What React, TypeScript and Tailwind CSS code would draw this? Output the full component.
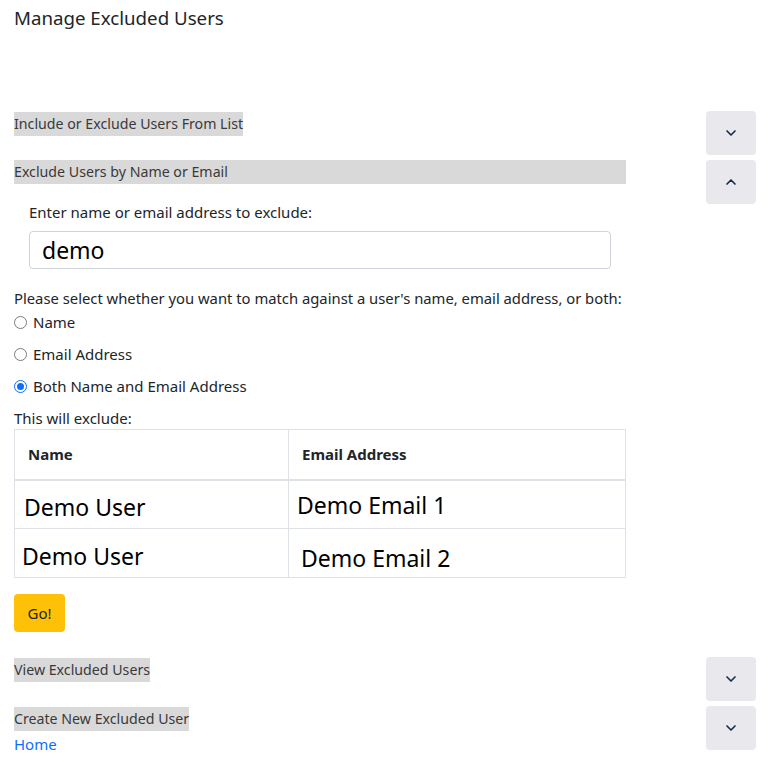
import { ChevronDown, ChevronUp } from "lucide-react";

const font = { fontFamily: '"Noto Sans", "Open Sans", sans-serif' };

function Toggle({ open }: { open?: boolean }) {
  return (
    <button className="w-[50px] h-[44px] rounded-[4px] bg-[#e8e8ed] flex items-center justify-center shrink-0 text-[#1b2a48]">
      {open ? <ChevronUp size={16} strokeWidth={2.5} /> : <ChevronDown size={16} strokeWidth={2.5} />}
    </button>
  );
}

function Section({
  title,
  open,
  full,
  first,
  children,
}: {
  title: string;
  open?: boolean;
  full?: boolean;
  first?: boolean;
  children?: React.ReactNode;
}) {
  return (
    <div className="flex items-start justify-between">
      <div className="w-[612px]">
        <div
          className={`${full ? "block" : "inline-block"} ${first ? "mt-px" : ""} bg-[#d9d9d9] h-[24px] leading-[24px] text-[14.2px] text-[#3a3a3a]`}
        >
          {title}
        </div>
        {children}
      </div>
      <Toggle open={open} />
    </div>
  );
}

function Radio({ label, checked }: { label: string; checked?: boolean }) {
  return (
    <label className="flex items-center gap-[6px] h-[32px] text-[15px] text-[#212529]">
      <span
        className={`w-[13px] h-[13px] rounded-full border flex items-center justify-center ${
          checked ? "border-[#0d6efd]" : "border-[#7a7a7a]"
        }`}
      >
        {checked && <span className="w-[7px] h-[7px] rounded-full bg-[#0d6efd]" />}
      </span>
      {label}
    </label>
  );
}

export default function App() {
  return (
    <div className="bg-white min-h-screen pl-[14px] pr-[27px] pt-[5px] text-[#212529]" style={font}>
      <h1 className="text-[18.7px] leading-[26px] text-[#212529]">Manage Excluded Users</h1>

      <div className="mt-[80px] flex flex-col gap-[5px]">
        <Section title="Include or Exclude Users From List" first />

        <Section title="Exclude Users by Name or Email" open full>
          <div className="pl-[15px] pt-[18px]">
            <div className="text-[15px] leading-[20px]">Enter name or email address to exclude:</div>
            <input
              defaultValue="demo"
              className="mt-[9px] w-[582px] h-[38px] border border-[#ced4da] rounded-[4px] px-[12px] text-[23px] text-black outline-none"
              style={font}
            />
          </div>
          <div className="mt-[19px] text-[14.8px] leading-[20px] whitespace-nowrap">
            Please select whether you want to match against a user's name, email address, or both:
          </div>
          <div className="-mt-[2px]">
            <Radio label="Name" />
            <Radio label="Email Address" />
            <Radio label="Both Name and Email Address" checked />
          </div>
          <div className="text-[15px] leading-[20px] mt-[6px]">This will exclude:</div>
          <table className="mt-[1px] w-full border-collapse border border-[#dee2e6] text-left">
            <thead>
              <tr className="h-[50px] border-b-2 border-[#dee2e6]">
                <th className="w-[274px] border-r border-[#dee2e6] pl-[13px] text-[15px] font-bold">Name</th>
                <th className="pl-[13px] text-[15px] font-bold">Email Address</th>
              </tr>
            </thead>
            <tbody className="text-[23px] text-black">
              <tr className="h-[49px] border-b border-[#dee2e6]">
                <td className="border-r border-[#dee2e6] pl-[9px] pt-[6px]">Demo User</td>
                <td className="pl-[8px] pt-[2px]">Demo Email 1</td>
              </tr>
              <tr className="h-[49px]">
                <td className="border-r border-[#dee2e6] pl-[7px] pt-[6px]">Demo User</td>
                <td className="pl-[12px] pt-[10px]">Demo Email 2</td>
              </tr>
            </tbody>
          </table>
          <button className="block mt-[16px] mb-[20px] w-[51px] h-[38px] bg-[#ffc107] rounded-[4px] text-[15px] text-[#212529]">
            Go!
          </button>
        </Section>

        <Section title="View Excluded Users" />
        <Section title="Create New Excluded User">
          <a href="#" className="block mt-[3px] text-[15px] leading-[20px] text-[#0d6efd]">Home</a>
        </Section>
      </div>
    </div>
  );
}
